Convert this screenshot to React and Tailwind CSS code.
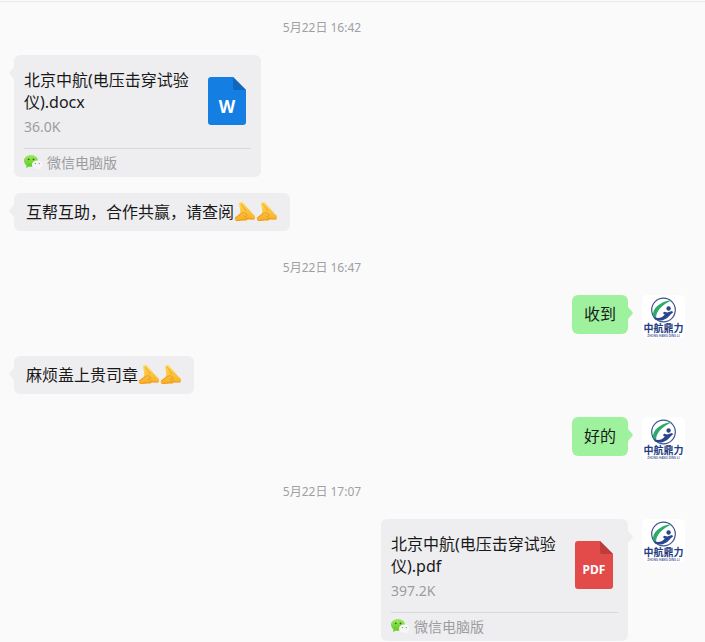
import React from 'react';

const messages = [
  { id: 1, type: 'time', text: '5月22日 16:42' },
  { id: 2, type: 'file', name: '北京中航(电压击穿试验仪).docx', size: '36.0K', kind: 'word' },
  { id: 3, type: 'text', text: '互帮互助，合作共赢，请查阅', hands: 2 },
  { id: 4, type: 'time', text: '5月22日 16:47' },
  { id: 5, type: 'text', text: '收到', mine: true },
  { id: 6, type: 'text', text: '麻烦盖上贵司章', hands: 2 },
  { id: 7, type: 'text', text: '好的', mine: true },
  { id: 8, type: 'time', text: '5月22日 17:07' },
  { id: 9, type: 'file', name: '北京中航(电压击穿试验仪).pdf', size: '397.2K', kind: 'pdf', mine: true },
];

const HandsEmoji = () => (
  <svg viewBox="0 0 22 22" className="w-[22px] h-[22px] shrink-0" role="img" aria-label="合十">
    <defs>
      <linearGradient id="skin" x1="0" y1="0" x2="0" y2="1">
        <stop offset="0" stopColor="#ffd958" />
        <stop offset="1" stopColor="#f9ad25" />
      </linearGradient>
    </defs>
    <path
      d="M5 2.800Q5.200 1.200 6.600 1.600Q7.800 .4 9 1.800L17.400 11.200Q18.600 13.200 20.600 14.400Q21.600 16.600 20.400 18.200L14 18.400Q12.600 20.200 9.600 19.600L2 20Q.4 19.200 .8 16.800L5.400 13Q7 11.400 6.200 9Z"
      fill="url(#skin)"
    />
    <path
      d="M7.200 3.200L12 9.800M1.400 16.800L7.600 12.600Q9.800 10.800 12 12.400Q13.800 14.200 12.200 15.400Q10.600 16 9.600 14.800M13.400 17.400Q16 18.400 19.800 18.200M2.800 19.600L8.600 18.800Q11.400 18.200 13.400 17.400"
      fill="none"
      stroke="#e0901c"
      strokeWidth=".7"
      strokeLinecap="round"
    />
  </svg>
);

const WechatIcon = () => (
  <svg viewBox="0 0 19 16" className="w-[19px] h-4 shrink-0" aria-hidden="true">
    <defs>
      <linearGradient id="wechatGreen" x1="0" y1="0" x2="0" y2="1">
        <stop offset="0" stopColor="#a0e860" />
        <stop offset="1" stopColor="#58c81e" />
      </linearGradient>
    </defs>
    <path d="M7 0C3 0 0 2.500 0 5.800C0 7.700 1 9.300 2.600 10.400L2 12.900L4.700 11.500Q5.900 11.800 7 11.800C11 11.800 14 9 14 5.800S11 0 7 0Z" fill="url(#wechatGreen)" />
    <circle cx="4.700" cy="4.300" r=".9" fill="#24661a" />
    <circle cx="9.500" cy="4.300" r=".9" fill="#24661a" />
    <path d="M13.200 5.500C10.200 5.500 8 7.400 8 9.700S10.200 13.900 13.200 13.900Q14.200 13.900 15 13.600L17.200 14.700L16.700 12.800Q18.600 11.500 18.600 9.700C18.600 7.400 16.200 5.500 13.200 5.500Z" fill="#f5f6f8" />
    <circle cx="11.500" cy="8.600" r=".7" fill="#85898b" />
    <circle cx="15.300" cy="8.600" r=".7" fill="#85898b" />
  </svg>
);

const FileIcon = ({ kind }) => {
  const word = kind === 'word';
  return (
    <svg viewBox="0 0 38 48" className="w-[38px] h-12 shrink-0" role="img" aria-label={word ? 'Word' : 'PDF'}>
      <path d="M3 0H25L38 13V45Q38 48 35 48H3Q0 48 0 45V3Q0 0 3 0Z" fill={word ? '#147ee3' : '#e34a4a'} />
      <path d="M25 0L38 13H27Q25 13 25 11Z" fill={word ? '#1068bd' : '#bd3d3d'} />
      <text
        x="19"
        y={word ? 36 : 33}
        textAnchor="middle"
        fill="#fff"
        fontSize={word ? 17 : 12}
        fontWeight="700"
        fontFamily="'Noto Sans', sans-serif"
      >
        {word ? 'W' : 'PDF'}
      </text>
    </svg>
  );
};

const Avatar = () => (
  <svg viewBox="0 0 43 43" className="w-[43px] h-[43px] shrink-0" role="img" aria-label="中航鼎力">
    <rect width="43" height="43" rx="5" fill="#fff" />
    <circle cx="21.500" cy="15" r="11.800" fill="none" stroke="#3d5290" strokeWidth="1.200" />
    <path d="M30.500 5.200C22 5 12 11 11 18.500C10.700 21 12 22.800 14.200 23.200C13.500 17 20 9 30.500 5.200Z" fill="#2cab69" />
    <path d="M10.500 20.500C13 24 19.500 24 22.800 19.500L20.800 18.300L22.200 16.700L25.200 17.500L30 16L31.200 17.200L28.500 19.500C25.500 24 18.500 27.500 13 24.500Z" fill="#2b4490" />
    <circle cx="26.600" cy="13.500" r="2.200" fill="#2b4490" />
    <text x="21.500" y="37" textAnchor="middle" fill="#253c80" fontSize="10" fontWeight="700" fontFamily="'Noto Sans CJK SC', sans-serif">
      中航鼎力
    </text>
    <text x="21.500" y="42" textAnchor="middle" fill="#53659a" fontSize="3" fontWeight="700" fontFamily="'Liberation Sans', sans-serif">
      ZHONG HANG DING LI
    </text>
  </svg>
);

// Small arrow on the side of a bubble
const Tail = ({ mine, green }) => (
  <svg
    viewBox="0 0 5 12"
    className={`absolute top-3 w-[5px] h-3 ${mine ? '-right-[5px]' : '-left-[5px] rotate-180'} ${green ? 'text-[#9ef29e]' : 'text-[#eeeef0]'}`}
    aria-hidden="true"
  >
    <path d="M0 0L4.500 5Q5 6 4.500 7L0 12Z" fill="currentColor" />
  </svg>
);

const FileCard = ({ message }) => (
  <div className="relative w-[247px] rounded-md bg-[#eeeef0] px-[10px] pt-[14px]">
    <Tail mine={message.mine} />
    <a href="#" className="block">
      <div className="flex gap-4 pr-[5px] pb-[10px]">
        <div className="flex-1">
          <p className="text-base leading-[22px] text-[#191919] break-all">{message.name}</p>
          <p className="mt-[3px] text-sm leading-[22px] text-[#9c9c9f]">{message.size}</p>
        </div>
        <div className="pt-2">
          <FileIcon kind={message.kind} />
        </div>
      </div>
    </a>
    <div className="flex items-center gap-1 border-t border-[#d9d9dc] h-[29px]">
      <WechatIcon />
      <span className="text-sm text-[#9c9c9f]">微信电脑版</span>
    </div>
  </div>
);

const TextBubble = ({ message }) => (
  <div className={`relative flex items-center rounded-md px-3 py-2 text-base text-[#191919] ${message.mine ? 'leading-[23px] bg-[#9ef29e]' : 'mb-[7px] leading-[22px] bg-[#eeeef0]'}`}>
    <Tail mine={message.mine} green={message.mine} />
    <span>{message.text}</span>
    {Array.from({ length: message.hands || 0 }, (_, i) => (
      <HandsEmoji key={i} />
    ))}
  </div>
);

const Message = ({ message }) => {
  if (message.type === 'time') {
    return <li className="mt-[5px] mb-[2px] pr-[41px] text-center text-xs leading-[18px] text-[#a0a0a3]">{message.text}</li>;
  }
  return (
    <li className={`flex items-start gap-[14px] ${message.mine ? 'justify-end pb-[2px]' : 'pl-[14px]'}`}>
      {message.type === 'file' ? <FileCard message={message} /> : <TextBubble message={message} />}
      {message.mine && <Avatar />}
    </li>
  );
};

const App = () => {
  return (
    <main className="min-h-screen pt-px bg-[#fafafa] font-['Noto_Sans','Noto_Sans_CJK_SC',sans-serif]">
      <ul className="flex flex-col gap-4 border-t border-[#ebebed] pt-3 pr-5">
        {messages.map((message) => (
          <Message key={message.id} message={message} />
        ))}
      </ul>
    </main>
  );
};

export default App;
